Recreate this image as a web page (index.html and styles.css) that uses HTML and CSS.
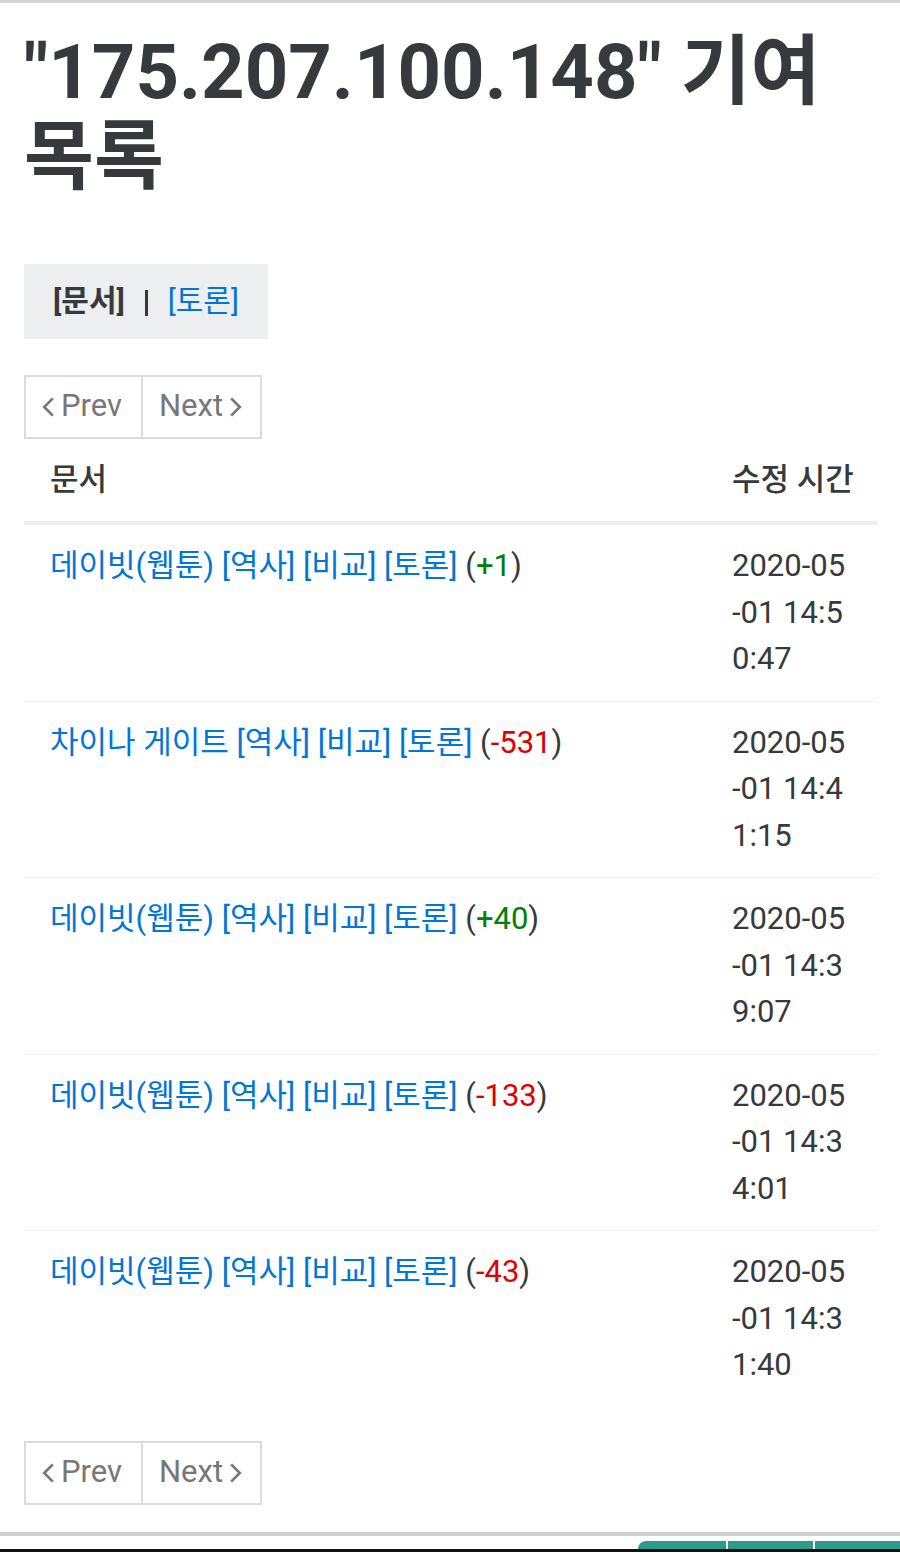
FILE: index.html
```html
<!DOCTYPE html>
<html lang="ko">
<head>
<meta charset="utf-8">
<title>"175.207.100.148" 기여 목록</title>
<link rel="stylesheet" href="styles.css">
</head>
<body>
<div class="topbar"></div>
<main class="content">
  <h1 class="title">"175.207.100.148" 기여 목록</h1>

  <div class="tabs">
    <span class="tab-current">[문서]</span>
    <span class="tab-sep" aria-hidden="true"></span>
    <a class="tab-link" href="#">[토론]</a>
  </div>

  <nav class="pager">
    <a class="pager-btn" href="#"><svg class="chev" viewBox="0 0 12 20" width="12" height="20"><path d="M10 2 L2 10 L10 18" fill="none" stroke="currentColor" stroke-width="2.4"/></svg>Prev</a>
    <a class="pager-btn" href="#">Next<svg class="chev" viewBox="0 0 12 20" width="12" height="20"><path d="M2 2 L10 10 L2 18" fill="none" stroke="currentColor" stroke-width="2.4"/></svg></a>
  </nav>

  <table class="contrib">
    <colgroup><col><col class="col-time"></colgroup>
    <thead>
      <tr><th>문서</th><th>수정 시간</th></tr>
    </thead>
    <tbody>
      <tr>
        <td><a href="#">데이빗(웹툰)</a> <a href="#">[역사]</a> <a href="#">[비교]</a> <a href="#">[토론]</a> (<span class="plus">+1</span>)</td>
        <td class="time">2020-05-01 14:50:47</td>
      </tr>
      <tr>
        <td><a href="#">차이나 게이트</a> <a href="#">[역사]</a> <a href="#">[비교]</a> <a href="#">[토론]</a> (<span class="minus">-531</span>)</td>
        <td class="time">2020-05-01 14:41:15</td>
      </tr>
      <tr>
        <td><a href="#">데이빗(웹툰)</a> <a href="#">[역사]</a> <a href="#">[비교]</a> <a href="#">[토론]</a> (<span class="plus">+40</span>)</td>
        <td class="time">2020-05-01 14:39:07</td>
      </tr>
      <tr>
        <td><a href="#">데이빗(웹툰)</a> <a href="#">[역사]</a> <a href="#">[비교]</a> <a href="#">[토론]</a> (<span class="minus">-133</span>)</td>
        <td class="time">2020-05-01 14:34:01</td>
      </tr>
      <tr>
        <td><a href="#">데이빗(웹툰)</a> <a href="#">[역사]</a> <a href="#">[비교]</a> <a href="#">[토론]</a> (<span class="minus">-43</span>)</td>
        <td class="time">2020-05-01 14:31:40</td>
      </tr>
    </tbody>
  </table>

  <nav class="pager pager-bottom">
    <a class="pager-btn" href="#"><svg class="chev" viewBox="0 0 12 20" width="12" height="20"><path d="M10 2 L2 10 L10 18" fill="none" stroke="currentColor" stroke-width="2.4"/></svg>Prev</a>
    <a class="pager-btn" href="#">Next<svg class="chev" viewBox="0 0 12 20" width="12" height="20"><path d="M2 2 L10 10 L2 18" fill="none" stroke="currentColor" stroke-width="2.4"/></svg></a>
  </nav>
</main>
<footer class="footer">
  <div class="footer-tabs">
    <span class="ftab ftab-first"></span>
    <span class="ftab"></span>
    <span class="ftab"></span>
  </div>
</footer>
</body>
</html>
```
FILE: styles.css
```css
html, body {
  margin: 0;
  padding: 0;
  background: #fff;
}

body {
  font-family: Roboto, "Noto Sans CJK KR", sans-serif;
  color: #373a3c;
  font-size: 31px;
  line-height: 46.5px;
}

a {
  color: #0275d8;
  text-decoration: none;
}

.topbar {
  height: 3px;
  background: #d4d4d4;
}

.content {
  padding: 0 23px 0 24px;
}

.title {
  margin: 27px 0 0;
  font-size: 76px;
  line-height: 85px;
  font-weight: 700;
}

.tabs {
  display: inline-flex;
  align-items: center;
  gap: 20px;
  margin-top: 64px;
  padding: 14px 29px;
  background: #eceeef;
  font-size: 30px;
}

.tab-current {
  font-weight: 700;
}

.tab-sep {
  flex: none;
  width: 3px;
  height: 26px;
  margin-top: 4px;
  background: #373a3c;
}

.pager {
  display: flex;
  margin-top: 36px;
}

.pager-btn {
  display: flex;
  align-items: center;
  gap: 6px;
  height: 60px;
  padding: 0 0 0 16px;
  border: 2px solid #dcdcdc;
  color: #777;
  font-size: 31px;
}

.pager-btn:first-child {
  width: 99px;
}

.pager-btn + .pager-btn {
  border-left: 0;
  width: 101px;
}

.chev {
  width: 13px;
  height: 22px;
}

.contrib {
  width: 100%;
  border-collapse: collapse;
  table-layout: fixed;
}

.col-time {
  width: 171px;
}

.contrib th,
.contrib td {
  padding: 18px 26px;
  text-align: left;
  vertical-align: top;
}

.contrib th {
  font-weight: 500;
  white-space: nowrap;
  border-bottom: 4px solid #eceeef;
}

.contrib td {
  border-bottom: 1px solid #eceeef;
}

.contrib tbody tr:last-child td {
  border-bottom: 0;
}

.time {
  word-break: break-all;
}

.plus {
  color: #008000;
}

.minus {
  color: #e00000;
}

.pager-bottom {
  margin-top: 34px;
  padding-bottom: 27px;
}

.footer {
  border-top: 4px solid #cfcfcf;
  padding-top: 5px;
}

.footer-tabs {
  display: flex;
  justify-content: flex-end;
  gap: 2px;
  border-bottom: 3px solid #111;
}

.ftab {
  width: 85px;
  height: 8px;
  background: #2b9c8c;
}

.ftab-first {
  width: 88px;
  border-top-left-radius: 10px;
}
```
